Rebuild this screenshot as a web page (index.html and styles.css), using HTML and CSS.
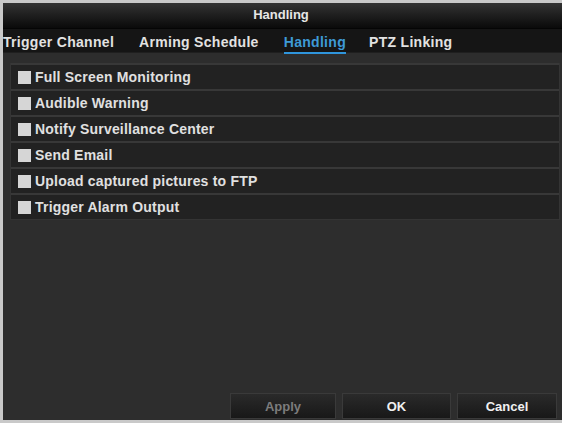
FILE: index.html
```html
<!DOCTYPE html>
<html>
<head>
<meta charset="utf-8">
<link rel="stylesheet" href="styles.css">
</head>
<body>
<div class="window">
  <div class="titlebar">Handling</div>
  <div class="tabs">
    <span class="tab">Trigger Channel</span>
    <span class="tab">Arming Schedule</span>
    <span class="tab active">Handling</span>
    <span class="tab">PTZ Linking</span>
  </div>
  <div class="content">
    <div class="list">
      <div class="row"><span class="check"></span><span class="label">Full Screen Monitoring</span></div>
      <div class="row"><span class="check"></span><span class="label">Audible Warning</span></div>
      <div class="row"><span class="check"></span><span class="label">Notify Surveillance Center</span></div>
      <div class="row"><span class="check"></span><span class="label">Send Email</span></div>
      <div class="row"><span class="check"></span><span class="label">Upload captured pictures to FTP</span></div>
      <div class="row"><span class="check"></span><span class="label">Trigger Alarm Output</span></div>
    </div>
  </div>
  <div class="footer">
    <button class="btn disabled apply">Apply</button>
    <button class="btn ok">OK</button>
    <button class="btn cancel">Cancel</button>
  </div>
</div>
</body>
</html>
```

FILE: styles.css
```css
html, body {
  margin: 0;
  padding: 0;
}
body {
  width: 562px;
  height: 423px;
  overflow: hidden;
  background: #c9c9c9;
  font-family: "Liberation Sans", Arial, sans-serif;
}
.window {
  margin: 3px 0 0 3px;
  width: 559px;
  height: 417px;
  display: flex;
  flex-direction: column;
  background: #2d2d2d;
}
.titlebar {
  height: 25px;
  line-height: 24px;
  text-align: center;
  color: #e6e6e6;
  font-size: 13px;
  font-weight: bold;
  background: linear-gradient(#333333, #1c1c1c 55%, #0a0a0a);
  border-bottom: 1px solid #050505;
  padding-right: 3px;
}
.tabs {
  height: 23px;
  background: #151515;
  display: flex;
  align-items: flex-start;
  gap: 25px;
  border-bottom: 1px solid #1f1f1f;
}
.tab {
  color: #e2e2e2;
  font-size: 14px;
  font-weight: bold;
  letter-spacing: 0.3px;
  line-height: 16px;
  margin-top: 5px;
  padding-bottom: 2px;
  white-space: nowrap;
}
.tab.active {
  color: #3e9ad6;
  border-bottom: 2px solid #2f95dc;
  margin-right: -2px;
}
.content {
  flex: 1;
  padding: 10px 2px 0 7px;
}
.list {
  border: 1px solid #343434;
  border-top: none;
}
.row {
  height: 24px;
  border-top: 2px solid #383838;
  background: #222222;
  display: flex;
  align-items: center;
  padding-left: 7px;
}
.check {
  width: 13px;
  height: 13px;
  background: #d6d6d6;
  flex: none;
}
.label {
  margin-left: 4px;
  color: #e0e0e0;
  font-size: 14px;
  font-weight: bold;
  letter-spacing: 0.2px;
  white-space: nowrap;
}
.footer {
  display: flex;
  justify-content: flex-end;
  gap: 6px;
  padding: 0 5px 1px 0;
}
.btn {
  height: 26px;
  border: 1px solid #3a3a3a;
  background: linear-gradient(#2a2a2a, #181818);
  color: #f0f0f0;
  font-family: "Liberation Sans", Arial, sans-serif;
  font-size: 13px;
  font-weight: bold;
  padding: 0;
}
.btn.apply { width: 106px; }
.btn.ok { width: 109px; }
.btn.cancel { width: 100px; }
.btn.disabled {
  color: #7c7c7c;
}
```
